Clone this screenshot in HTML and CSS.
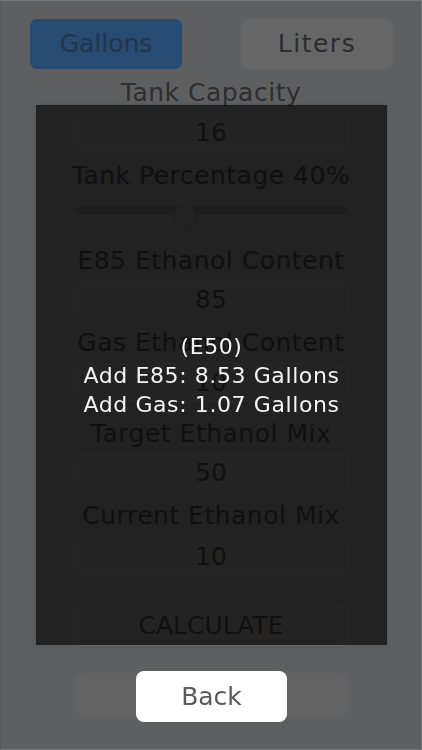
FILE: index.html
```html
<!DOCTYPE html>
<html>
<head>
<meta charset="utf-8">
<link rel="stylesheet" href="styles.css">
</head>
<body>
<div class="screen">
  <div class="units">
    <div class="unit unit-active">Gallons</div>
    <div class="unit unit-liters">Liters</div>
  </div>
  <div class="label m-cap">Tank Capacity</div>
  <div class="field m-f1">16</div>
  <div class="label m-pct">Tank Percentage 40%</div>
  <div class="slider">
    <div class="track"></div>
    <div class="thumb"></div>
  </div>
  <div class="label m-e85">E85 Ethanol Content</div>
  <div class="field m-f2">85</div>
  <div class="label m-gas">Gas Ethanol Content</div>
  <div class="field m-f3">10</div>
  <div class="label m-target">Target Ethanol Mix</div>
  <div class="field m-f4">50</div>
  <div class="label m-current">Current Ethanol Mix</div>
  <div class="field m-f5">10</div>
  <div class="field calc">CALCULATE</div>
  <div class="field back-under"></div>
</div>
<div class="modal">
  <div class="panel">
    <div class="result">(E50)</div>
    <div class="result">Add E85: 8.53 Gallons</div>
    <div class="result">Add Gas: 1.07 Gallons</div>
  </div>
  <div class="back-btn">Back</div>
</div>
</body>
</html>
```
FILE: styles.css
```css
html, body {
  margin: 0;
  padding: 0;
  background: #5e5f60;
}

body {
  font-family: "DejaVu Sans", "Liberation Sans", sans-serif;
  color: #2e2e2e;
}

.screen {
  width: 422px;
  height: 750px;
  box-sizing: border-box;
  border: 1px solid #767778;
  border-left-color: #58595a;
  padding-top: 18px;
  background: #5e5f60;
  overflow: hidden;
}

.units {
  display: flex;
  justify-content: space-between;
  padding: 0 28px 0 29px;
}

.unit {
  width: 152px;
  height: 50px;
  border-radius: 7px;
  background: #666667;
  font-size: 25px;
  line-height: 50px;
  text-align: center;
  color: #2c2c2c;
}

.unit-liters {
  letter-spacing: 1.5px;
}

.unit-active {
  background: #284b72;
  color: #22354b;
}

.label {
  height: 30px;
  line-height: 30px;
  font-size: 25px;
  text-align: center;
  white-space: nowrap;
  letter-spacing: 0.5px;
}

.field {
  width: 276px;
  height: 39px;
  margin: 0 auto;
  box-sizing: border-box;
  border: 1px solid #6c6c6c;
  border-radius: 8px;
  background: #636364;
  font-size: 25px;
  line-height: 37px;
  text-align: center;
}

.m-cap { margin-top: 9px; }
.m-f1 { margin-top: 5px; }
.m-pct { margin-top: 9px; }
.m-e85 { margin-top: 18px; }
.m-f2 { margin-top: 4px; }
.m-gas { margin-top: 9px; }
.m-f3 { margin-top: 5px; }
.m-target { margin-top: 17px; }
.m-f4 { margin-top: 4px; }
.m-current { margin-top: 9px; }
.m-f5 { margin-top: 6px; }

.calc {
  margin-top: 27px;
  height: 43px;
  line-height: 44px;
}

.back-under {
  margin-top: 27px;
  width: 273px;
  height: 44px;
  border: none;
  background: #636364;
}

.slider {
  position: relative;
  width: 276px;
  height: 24px;
  margin: 13px auto 0;
}

.track {
  margin-top: 6px;
  height: 12px;
  box-sizing: border-box;
  border: 1px solid #6a6a6a;
  border-radius: 6px;
  background: #535354;
}

.thumb {
  position: absolute;
  top: 0;
  left: 100px;
  width: 24px;
  height: 24px;
  box-sizing: border-box;
  border-radius: 50%;
  border: 1px solid #4c4c4c;
  background: #606061;
}

.modal {
  position: fixed;
  top: 0;
  left: 0;
  width: 422px;
  height: 750px;
  display: flex;
  flex-direction: column;
  align-items: flex-start;
}

.panel {
  margin-top: 105px;
  margin-left: 36px;
  width: 351px;
  height: 540px;
  background: rgba(0, 0, 0, 0.638);
  display: flex;
  flex-direction: column;
  justify-content: center;
  align-items: center;
  box-shadow: 0 0 4px rgba(0, 0, 0, 0.15);
}

.result {
  font-size: 22px;
  line-height: 29px;
  color: #f4f4f4;
  letter-spacing: 0.6px;
  white-space: nowrap;
}

.back-btn {
  margin-top: 26px;
  margin-left: 136px;
  width: 151px;
  height: 51px;
  border-radius: 8px;
  background: #ffffff;
  color: #5a5a5a;
  font-size: 25px;
  line-height: 51px;
  text-align: center;
}
```
